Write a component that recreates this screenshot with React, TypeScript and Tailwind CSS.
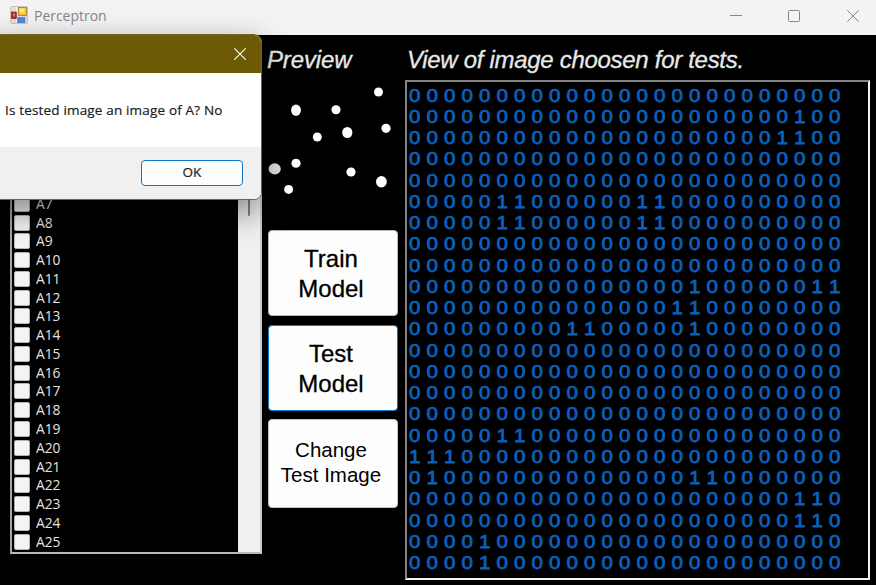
const COLUMNS = 25;

// Column indexes that are set, for each row of the bitmap.
const SET_CELLS: number[][] = [
  [], [22], [21, 22], [], [], [5, 6, 13, 14], [5, 6, 13, 14], [], [],
  [16, 23, 24], [15, 16], [9, 10, 16], [], [], [], [],
  [5, 6], [0, 1, 2], [1, 16, 17], [22, 23], [22, 23], [4], [4],
];

const ROWS = SET_CELLS.map((cells) =>
  Array.from({ length: COLUMNS }, (_, i) => (cells.includes(i) ? '1' : '0')).join(' '),
);

const ITEMS = Array.from({ length: 19 }, (_, i) => `A${i + 7}`);

// Preview blobs: centre x, centre y, horizontal radius, vertical radius.
const DOTS = [
  [110.5, 12, 4.5, 4.6], [28, 30.2, 4.9, 5.6], [68, 29.7, 4.6, 4.5], [118, 48.3, 4.6, 4.6],
  [49.3, 57, 4.5, 4.6], [79.3, 52.5, 5.1, 5.6], [28, 83.3, 4.6, 4.5],
  [83, 92, 4.6, 4.5], [113.4, 101.7, 5.4, 5.7], [20.6, 109.4, 4.5, 4.5],
];

function AppIcon() {
  return (
    <svg width="18" height="18" viewBox="0 0 18 18" className="-mt-[2px] shrink-0">
      <rect x=".5" y=".5" width="17" height="17" rx="1" fill="#dedede" stroke="#c6c6c6" />
      <path d="M1 6.5h16M6.5 1v16" stroke="#f7f7f7" />
      <rect x="1.5" y="6" width="4.8" height="6.5" fill="#b52722" stroke="#8b211e" strokeWidth=".7" />
      <rect x="3" y="7.5" width="2" height="3" fill="#df7770" />
      <rect x="8.5" y="1.5" width="8" height="8" fill="#f6c72e" stroke="#a97b20" strokeWidth=".8" />
      <rect x="9.5" y="2.5" width="5" height="4" fill="#ffe486" />
      <rect x="7.8" y="11.8" width="7" height="4.5" fill="#4c8fe8" stroke="#315fb0" strokeWidth=".7" />
    </svg>
  );
}

function TitleBar() {
  return (
    <header className="flex h-[35px] shrink-0 items-center bg-[#f3f3f3] pl-[10px] pb-[4px]">
      <AppIcon />
      <span className="-mt-[2px] ml-[6px] origin-left scale-x-[0.93] font-['Open_Sans',sans-serif] text-[15px] leading-5 text-[#868686]">Perceptron</span>
      <div className="ml-auto flex items-center gap-[46px] pr-[17px] pt-[1px]">
        <svg width="12" height="12" viewBox="0 0 12 12" fill="none" stroke="#858585" className="-ml-px mr-px"><path d="M0 5.5h12" /></svg>
        <svg width="12" height="12" viewBox="0 0 12 12" fill="none" stroke="#858585" className="-ml-px mr-px"><rect x=".5" y=".5" width="11" height="11" rx="1" /></svg>
        <svg width="12" height="12" viewBox="0 0 12 12" fill="none" stroke="#858585"><path d="M.3.3l11.4 11.4M11.7.3L.3 11.7" /></svg>
      </div>
    </header>
  );
}

function ImageList() {
  return (
    <div className="mt-[45px] flex h-[474px] w-[252px] border-2 border-[#a5a5a9] border-r-[#c9c9cc] border-b-[#b9b9bc]">
      <ul className="flex flex-1 flex-col justify-end overflow-hidden pb-[1px] pl-[2px]">
        {ITEMS.map((item) => (
          <li key={item} className="flex h-[18.77px] shrink-0 items-center">
            <span className="h-4 w-4 rounded-[2px] border border-[#b4b4b4] bg-[#f4f4f4]" />
            <span className="-mt-[2px] ml-[6px] origin-left scale-x-[0.92] font-['Open_Sans',sans-serif] text-[15px] leading-[18px] text-[#e4e4e4]">{item}</span>
          </li>
        ))}
      </ul>
      <div className="flex w-[22px] justify-center bg-[#f0f0f0]">
        <div className="h-[134px] w-[2px] rounded-full bg-[#858585]" />
      </div>
    </div>
  );
}

function Preview() {
  return (
    <svg width="130" height="118" viewBox="0 0 130 118" fill="#fff" className="mt-[5px]">
      {DOTS.map(([x, y, rx, ry]) => <ellipse key={`${x}-${y}`} cx={x} cy={y} rx={rx} ry={ry} />)}
      <ellipse cx="6.7" cy="88.9" rx="6.1" ry="5.6" fill="#e2e2e2" />
    </svg>
  );
}

const BUTTON = 'flex w-full items-center justify-center rounded-[4px] border bg-[#fdfdfd] pr-[4px] text-center text-black';

export default function App() {
  return (
    <div className="relative flex h-[585px] w-[876px] flex-col overflow-hidden bg-black font-['Liberation_Sans',Arial,sans-serif]">
      <TitleBar />
      <main className="flex flex-1 items-start pl-[10px]">
        <ImageList />
        <section className="ml-[6px] flex w-[130px] flex-col">
          <h2 className="-ml-px mr-px mt-[10px] h-[30px] whitespace-nowrap pt-px text-[24px] italic leading-7 tracking-[-0.15px] text-[#e8e8e8] [-webkit-text-stroke:0.3px_#e8e8e8]">Preview</h2>
          <Preview />
          <div className="mt-[32px] flex flex-col gap-[9px]">
            <button className={`${BUTTON} h-[86px] border-[#b8b8b8] pt-px text-[24px] leading-[30px] [-webkit-text-stroke:0.3px_#000]`}>Train<br />Model</button>
            <button className={`${BUTTON} h-[86px] border-[#0878cf] pt-px text-[24px] leading-[30px] [-webkit-text-stroke:0.3px_#000]`}>Test<br />Model</button>
            <button className={`${BUTTON} -mt-px h-[89px] border-[#c4c4c4] pb-[3px] text-[20.5px] leading-[25px] text-[#222]`}>Change<br />Test Image</button>
          </div>
        </section>
        <section className="ml-[7px] flex w-[466px] flex-col">
          <h2 className="mt-[10px] h-[35px] whitespace-nowrap pl-[2px] pt-px text-[24px] italic leading-7 tracking-[-0.3px] text-[#e8e8e8] [-webkit-text-stroke:0.3px_#e8e8e8]">View of image choosen for tests.</h2>
          <div className="h-[500px] w-[465px] border-2 border-b-[#f4f4f4] border-l-[#858585] border-r-[#f4f4f4] border-t-[#858585] pl-[2px] pt-[3.5px]">
            {ROWS.map((row, i) => (
              <p key={i} className="h-[21.25px] w-max origin-left scale-x-[1.14] whitespace-nowrap text-[18px] leading-[21.25px] text-[#0b61bd] [-webkit-text-stroke:0.75px_#0b61bd] [word-spacing:0.34px]">{row}</p>
            ))}
          </div>
        </section>
      </main>
      <div role="dialog" className="absolute -left-[20px] top-[34px] flex h-[166px] w-[282px] flex-col overflow-hidden rounded-[8px] border border-[#77651a] bg-white font-['Open_Sans',sans-serif] shadow-[0_12px_32px_rgba(0,0,0,0.45)]">
        <div className="flex h-[38px] shrink-0 items-center justify-end bg-[#6c5a07] pr-[15px]">
          <svg width="12" height="12" viewBox="0 0 12 12" fill="none" stroke="#fff" strokeWidth="1.1"><path d="M.3.3l11.4 11.4M11.7.3L.3 11.7" /></svg>
        </div>
        <div className="flex h-[74px] shrink-0 items-center pl-[24px]">
          <p className="whitespace-nowrap text-[13.5px] leading-5 tracking-[0.17px] text-[#1c1c1c] [-webkit-text-stroke:0.2px_#1c1c1c]">Is tested image an image of A? No</p>
        </div>
        <div className="flex flex-1 items-center justify-end bg-[#f0f0f0] pb-px pr-[18px]">
          <button className="flex h-[26px] w-[102px] items-center justify-center rounded-[4px] border border-[#0878cf] bg-[#fdfdfd] text-[13.5px] text-[#1c1c1c] [-webkit-text-stroke:0.2px_#1c1c1c]">OK</button>
        </div>
      </div>
    </div>
  );
}
